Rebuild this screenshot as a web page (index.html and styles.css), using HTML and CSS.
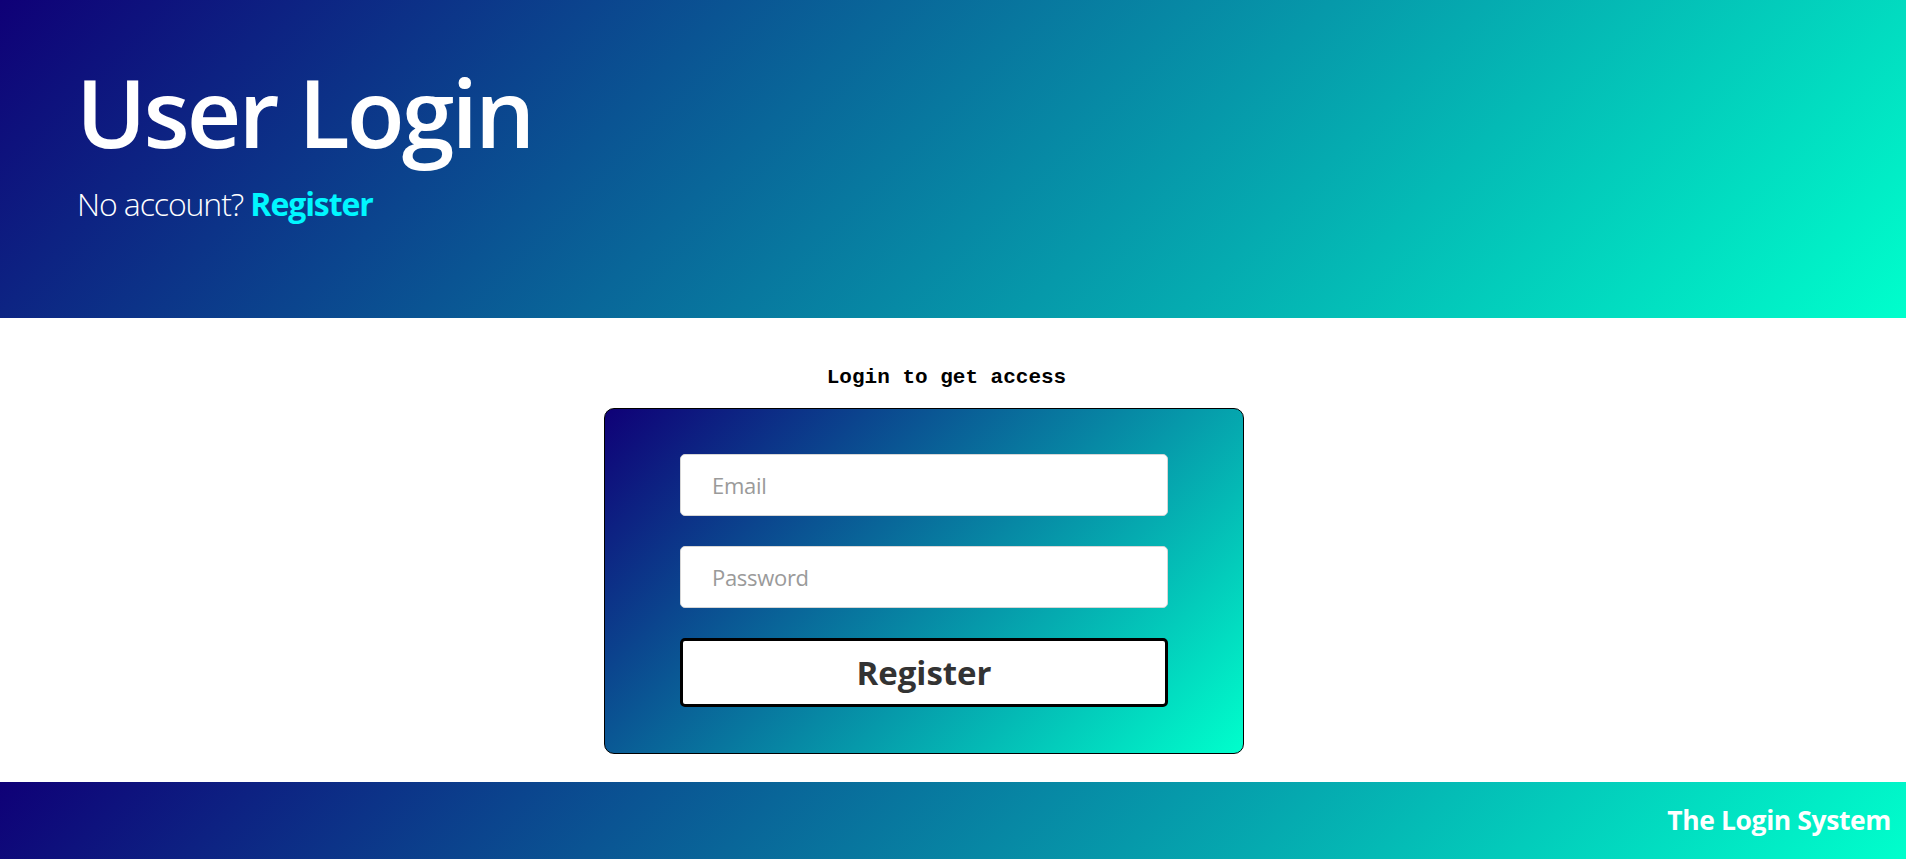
FILE: index.html
```html
<!DOCTYPE html>
<html>
<head>
<meta charset="utf-8">
<title>User Login</title>
<link rel="stylesheet" href="styles.css">
</head>
<body>
<header class="hero">
  <h1 class="hero-title">User Login</h1>
  <p class="hero-sub">No account? <a class="hero-link" href="#">Register</a></p>
</header>
<main class="main">
  <div class="login-wrap">
    <h2 class="login-heading">Login to get access</h2>
    <form class="card">
      <input class="field" type="email" placeholder="Email">
      <input class="field" type="password" placeholder="Password">
      <button class="btn" type="button">Register</button>
    </form>
  </div>
</main>
<footer class="footer">
  <span class="footer-text">The Login System</span>
</footer>
</body>
</html>
```
FILE: styles.css
```css
* { box-sizing: border-box; }
html, body { margin: 0; padding: 0; }
body {
  font-family: "Open Sans", "Noto Sans", sans-serif;
  background: #fff;
  width: 1906px;
  height: 859px;
  overflow: hidden;
  display: flex;
  flex-direction: column;
}
.hero {
  height: 318px;
  flex: none;
  background: linear-gradient(135deg, #0f0077, #00ffcc);
  padding: 56px 0 0 0;
  color: #fff;
}
.hero-title {
  margin: 0 0 0 76px;
  font-size: 95px;
  font-weight: 600;
  line-height: 110px;
  letter-spacing: -3px;
}
.hero-sub {
  margin: 18px 0 0 77px;
  font-size: 32px;
  font-weight: 300;
  line-height: 40px;
  letter-spacing: -1.1px;
}
.hero-link {
  color: #00f7ff;
  font-weight: 700;
  text-decoration: none;
}
.main {
  flex: 1;
  display: flex;
  padding-top: 50px;
}
.login-wrap {
  margin-left: 604px;
  width: 685px;
  display: flex;
  flex-direction: column;
}
.login-heading {
  margin: 0 0 20px 0;
  text-align: center;
  font-family: "Liberation Mono", "Courier New", monospace;
  font-size: 21px;
  font-weight: 700;
  line-height: 20px;
  color: #000;
}
.card {
  width: 640px;
  height: 346px;
  border: 1px solid #000;
  border-radius: 10px;
  background: linear-gradient(135deg, #0f0077, #00ffcc);
  padding: 45px 75px;
  display: flex;
  flex-direction: column;
  gap: 30px;
}
.field {
  width: 488px;
  height: 62px;
  flex: none;
  border: 1px solid #d6d6d6;
  border-radius: 5px;
  background: #fff;
  padding: 0 31px;
  font-family: "Open Sans", "Noto Sans", sans-serif;
  font-size: 22px;
  letter-spacing: -0.3px;
  color: #333;
  outline: none;
}
.field::placeholder { color: #9a9a9a; }
.btn {
  width: 488px;
  height: 69px;
  flex: none;
  border: 3px solid #000;
  border-radius: 5px;
  background: #fff;
  font-family: "Open Sans", "Noto Sans", sans-serif;
  font-size: 33px;
  font-weight: 700;
  color: #333;
  padding: 0;
}
.footer {
  height: 77px;
  flex: none;
  background: linear-gradient(135deg, #0f0077, #00ffcc);
  display: flex;
  align-items: center;
  justify-content: flex-end;
  padding: 0 15px 2px 0;
}
.footer-text {
  color: #fff;
  font-size: 26.5px;
  font-weight: 700;
  letter-spacing: -0.4px;
}
```
